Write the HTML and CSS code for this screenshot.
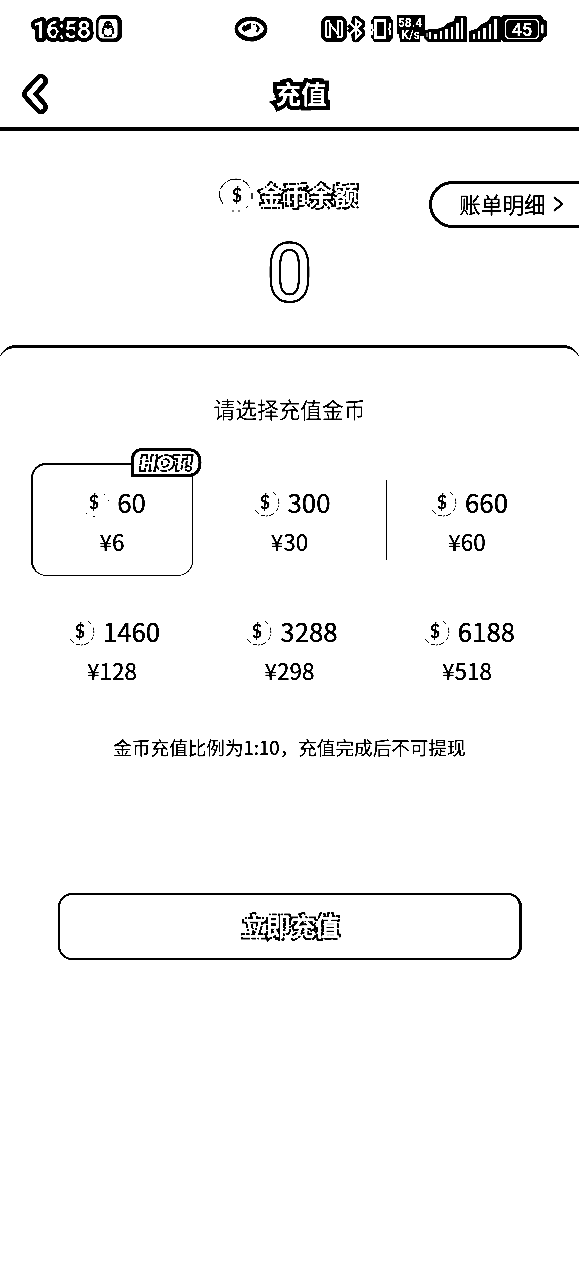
FILE: index.html
```html
<!DOCTYPE html>
<html lang="zh-CN">
<head>
<meta charset="utf-8">
<title>充值</title>
<link rel="stylesheet" href="styles.css">
</head>
<body>
<div class="status">
  <svg class="status-left" width="96" height="32" viewBox="28 13 96 32">
    <text class="knock clock" x="33" y="38.300" textLength="58">16:58</text>
    <rect x="96" y="15" width="26" height="27" rx="7"/>
    <rect x="98.500" y="19" width="19" height="19.500" rx="4" fill="#fff"/>
    <ellipse cx="108" cy="30.500" rx="5" ry="6" fill="#fff" stroke="#000" stroke-width="1.300"/>
    <path d="M103.500 27c0-8 9-8 9 0l-4.500 2zM102 28l3 1-2 5-1.500-1zM114 28l-3 1 2 5 1.500-1zM104 35.500h3v1.500h-3zM109 35.500h3v1.500h-3z"/>
    <circle cx="106.500" cy="24.500" r="1" fill="#fff"/><circle cx="109.700" cy="24.500" r="1" fill="#fff"/>
  </svg>
  <svg class="status-eye" width="36" height="28" viewBox="233 15 36 28">
    <ellipse cx="251" cy="29" rx="16.500" ry="12.500"/>
    <path d="M237.500 29c6-11 21-11 27 0-6 10.500-21 10.500-27 0z" fill="#fff"/>
    <path d="M244 25q-4 3 0 7l2-1v-5zM256 24q7 4 1 9l-1-2q2-3 0-5zM250 24q4-1 6 1" fill="#000" stroke="none"/>
    <path d="M245 31v-4q1-3 6-4v5q-1 2-6 3z"/>
  </svg>
  <svg class="status-right" width="230" height="32" viewBox="320 13 230 32">
    <rect x="321" y="16" width="26" height="26" rx="7"/>
    <path d="M330 21h-2q-2 0-2 2v12q0 2 2 2h2V24l8 10V21h2q2 0 2 2v12q0 2-2 2h-3" fill="none" stroke="#fff" stroke-width="2"/>
    <path d="M350 23l11 10-5 5V20l5 4-11 10" fill="none" stroke="#000" stroke-width="9" stroke-linejoin="round"/>
    <path d="M350 23l11 10-5 5V20l5 4-11 10" fill="none" stroke="#fff" stroke-width="2.200"/>
    <path d="M373 18q0-2 3-2h12q3 0 3 2l2 3v17l-2 2q0 2-3 2h-12q-3 0-3-2l-2-3V21z"/>
    <rect x="375.500" y="20.500" width="9.500" height="17" fill="none" stroke="#fff" stroke-width="2.800"/>
    <path d="M372 24v4l1 2-1 2v3M390 23v4l-1 2 1 2v4" fill="none" stroke="#fff" stroke-width="1.500"/>
    <path d="M397 15h28v21h-5v6h-20l-1-8h-2z"/>
    <text class="speed" x="398" y="26.800" textLength="24" lengthAdjust="spacingAndGlyphs">58.4</text>
    <text class="speed" x="401" y="39" textLength="19" lengthAdjust="spacingAndGlyphs">K/s</text>
    <path d="M424 30l8-1h5l6-2 5-4 6-2 1-5h10q2 0 2 2v24h-39l-4-4z"/>
    <path d="M430 32v7M435.500 34v5M441 31v8M446.500 29v10M452 27v12M457.500 23v16M462 18v21" stroke="#fff" stroke-width="2.400" fill="none"/>
    <path d="M427 33v4" stroke="#fff"/>
    <path d="M469 31l7-2 6-5 6-3 3-5h8q2 0 2 2v24h-32z"/>
    <path d="M474 34v5M479 31v8M484.500 28v11M490 24v15M495.500 19v20" stroke="#fff" stroke-width="2.800" fill="none"/>
    <path d="M505 15h34q4 0 4 4l4 2v15l-4 2q0 4-4 4h-34q-4 0-4-4V19q0-4 4-4z"/>
    <rect x="505.500" y="19.500" width="33" height="19" rx="4" fill="none" stroke="#fff" stroke-width="1.700"/>
    <path d="M541.500 25h1.500v8h-1.500z" fill="#fff" stroke="#fff"/>
    <text class="battery" x="522" y="35.500">45</text>
  </svg>
</div>

<header class="header">
  <svg class="back" width="32" height="42" viewBox="20 74 32 42">
    <path class="back-edge" d="M41 82L29 95l12 13"/>
    <path class="back-line" d="M41 82L29 95l12 13"/>
  </svg>
  <h1 class="title">充值</h1>
</header>

<section class="balance">
  <div class="balance-label">
    <svg width="36" height="36" viewBox="0 0 36 36">
      <path class="coin-ring" d="M5 27Q-1 19 3 11Q8 2 18 2Q29 3 32 11M34 16v6M28 31l2-2M14 34h2M20 34h2"/>
      <text class="coin-sign" x="19" y="24.500">$</text>
    </svg>
    <svg width="104" height="36" viewBox="0 0 104 36">
      <text class="rough" x="2" y="27.500" textLength="99">金币余额</text>
    </svg>
  </div>
  <div class="amount">0</div>
  <a class="bill">账单明细<svg width="12" height="18" viewBox="0 0 12 18"><path d="M1 2l8 7-8 7" fill="none" stroke="#000" stroke-width="2.300"/></svg></a>
</section>

<main class="panel">
  <h2 class="prompt">请选择充值金币</h2>
  <div class="grid">
    <div class="card selected">
      <div class="coins"><svg class="coin" viewBox="0 0 28 28"><text class="coin-sign" x="13" y="20.500">$</text><path d="M23 6h1v1h-1zM27 12h1v1h-1zM5 25h1v1h-1zM12 28h2v1h-2z"/></svg>60</div>
      <div class="price">¥6</div>
      <svg class="hot" width="72" height="31" viewBox="130 447 72 31">
        <path d="M132.500 475.500V460q0-10.500 10.500-10.500h44q13 0 13 13t-13 13z" fill="#fff" stroke="#000" stroke-width="3"/>
        <text class="hot-text" x="140" y="469.500" textLength="52" lengthAdjust="spacingAndGlyphs">HOT!</text>
      </svg>
    </div>
    <div class="card"><div class="coins"><svg class="coin" viewBox="0 0 28 28"><path class="coin-edge" d="M3 22a12.500 12.500 0 0 0 22-14M21 4l3 3"/><text class="coin-sign" x="13" y="20.500">$</text></svg>300</div><div class="price">¥30</div></div>
    <div class="card divided"><div class="coins"><svg class="coin" viewBox="0 0 28 28"><path class="coin-edge" d="M3 22a12.500 12.500 0 0 0 22-14M21 4l3 3"/><text class="coin-sign" x="13" y="20.500">$</text></svg>660</div><div class="price">¥60</div></div>
    <div class="card"><div class="coins"><svg class="coin" viewBox="0 0 28 28"><path class="coin-edge" d="M3 22a12.500 12.500 0 0 0 22-14M21 4l3 3"/><text class="coin-sign" x="13" y="20.500">$</text></svg>1460</div><div class="price">¥128</div></div>
    <div class="card"><div class="coins"><svg class="coin" viewBox="0 0 28 28"><path class="coin-edge" d="M3 22a12.500 12.500 0 0 0 22-14M21 4l3 3"/><text class="coin-sign" x="13" y="20.500">$</text></svg>3288</div><div class="price">¥298</div></div>
    <div class="card"><div class="coins"><svg class="coin" viewBox="0 0 28 28"><path class="coin-edge" d="M3 22a12.500 12.500 0 0 0 22-14M21 4l3 3"/><text class="coin-sign" x="13" y="20.500">$</text></svg>6188</div><div class="price">¥518</div></div>
  </div>
  <p class="note">金币充值比例为<span class="ratio">1:10</span>，充值完成后不可提现</p>
  <button class="submit">
    <svg width="104" height="36" viewBox="0 0 104 36"><text class="rough" x="4" y="27" textLength="97">立即充值</text></svg>
  </button>
</main>
</body>
</html>
```
FILE: styles.css
```css
* { box-sizing: border-box; margin: 0; padding: 0; }
html { background: #fff; }
body {
  width: 579px;
  height: 1280px;
  overflow: hidden;
  background: #fff;
  color: #000;
  font-family: "Noto Sans CJK SC", "Noto Sans", sans-serif;
  filter: contrast(6);
}
svg { display: block; flex: none; }

.status { display: flex; height: 60px; padding: 13px 29px 0 28px; align-items: flex-start; }
.status-eye { margin: 2px 51px 0 109px; }
.knock { fill: #fff; stroke: #000; stroke-width: 8px; stroke-linejoin: round; paint-order: stroke; }
.clock { font: 500 24.5px Roboto, sans-serif; }
.speed { font: 700 12.5px/12px Roboto, sans-serif; fill: #fff; }
.battery { font: 700 18px Roboto, sans-serif; fill: #fff; text-anchor: middle; }

.header {
  display: grid;
  grid-template-columns: 32px 1fr 32px;
  align-items: center;
  height: 71px;
  padding: 0 20px;
  border-bottom: 4px solid #000;
}
.back-edge, .back-line { fill: none; stroke-linecap: round; stroke-linejoin: round; }
.back-edge { stroke: #000; stroke-width: 14px; }
.back-line { stroke: #fff; stroke-width: 5px; }
.title {
  margin-top: -2px;
  padding-left: 23px;
  font-size: 25.5px;
  line-height: 36px;
  font-weight: 700;
  text-align: center;
  color: #fff;
  -webkit-text-stroke: 8px #000;
  paint-order: stroke fill;
}

.balance { position: relative; height: 214px; padding-top: 46px; }
.balance-label { display: flex; justify-content: center; gap: 3px; }
.coin-ring { fill: none; stroke: #000; stroke-width: 1.1px; stroke-dasharray: 14 2 9 1; }
.rough {
  font-size: 24.5px;
  font-weight: 700;
  fill: #fff;
  stroke: #000;
  stroke-width: 4px;
  stroke-dasharray: 5 1 2 1.5 7 1;
  paint-order: stroke;
}
.amount {
  margin-top: 14px;
  font: 500 81px/94px Roboto, sans-serif;
  text-align: center;
  color: #fff;
  -webkit-text-stroke: 2.2px #000;
}
.bill {
  position: absolute;
  top: 50px;
  right: 0;
  display: flex;
  align-items: center;
  gap: 7px;
  width: 150px;
  height: 47px;
  padding: 0 0 2px 27px;
  border: 3px solid #000;
  border-right: 0;
  border-radius: 24px 0 0 24px;
  font-size: 21.7px;
  -webkit-text-stroke: .2px #000;
}

.panel {
  height: 935px;
  margin: 0 -1px;
  padding-top: 45px;
  border-top: 3px solid #000;
  border-radius: 17px 17px 0 0;
}
.prompt { font-size: 21.7px; line-height: 32px; font-weight: 400; text-align: center; }
.grid {
  display: grid;
  grid-template-columns: repeat(3, 162px);
  grid-auto-rows: 113px;
  gap: 16px 15.500px;
  padding: 38px 0 0 32px;
}
.card { position: relative; display: flex; flex-direction: column; align-items: center; padding-top: 21px; }
.selected { border: 1px solid #000; border-width: 2px 1px 1px 2px; border-radius: 15px; padding: 19px 1px 0 0; }
.divided::before { content: ""; position: absolute; left: 0; top: 17px; width: 1px; height: 80px; background: #000; }
.coins {
  display: flex;
  align-items: center;
  gap: 8px;
  height: 36px;
  padding-left: 3px;
  font-size: 25.8px;
  line-height: 36px;
  -webkit-text-stroke: .3px #000;
}
.coin { width: 28px; height: 28px; overflow: visible; }
.coin-edge { fill: none; stroke: #000; stroke-width: 1px; stroke-dasharray: 6 2 4 1 2 1; }
.coin-sign { font: 700 18px Lato, sans-serif; text-anchor: middle; -webkit-text-stroke: 0; }
.price { margin-top: 6px; font-size: 22.5px; line-height: 30px; -webkit-text-stroke: .25px #000; }
.hot { position: absolute; left: 97px; top: -18px; }
.hot-text { font: italic 900 19px Lato, sans-serif; fill: #fff; stroke: #000; stroke-width: 3.5px; stroke-dasharray: 9 1 5 1; paint-order: stroke; }

.note { margin-top: 28px; font-size: 18.600px; line-height: 28px; text-align: center; -webkit-text-stroke: .15px #000; }
.ratio { -webkit-text-stroke: .3px #000; }
.submit {
  display: flex;
  align-items: center;
  justify-content: center;
  width: 464px;
  height: 67px;
  margin: 132px 0 0 59px;
  border: 2px solid #000;
  border-width: 2px 3px 2px 2px;
  border-radius: 14px;
  background: #fff;
}
```
